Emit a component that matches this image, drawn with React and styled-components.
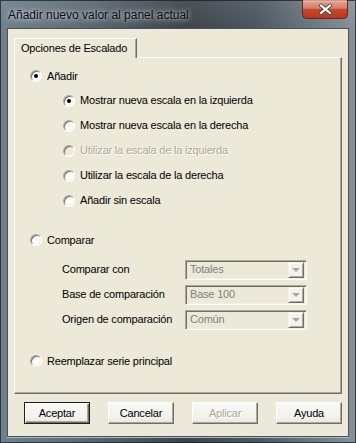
import React from 'react'
import styled, {createGlobalStyle} from 'styled-components'

const GlobalStyle = createGlobalStyle`
  html, body {
    margin: 0;
    padding: 0;
    width: 356px;
    height: 443px;
    overflow: hidden;
    background: #2b3036;
  }

  body {
    font-family: "Liberation Sans", Arial, sans-serif;
  }
`

const CloseIcon = () => (
  <svg width="46" height="19" viewBox="0 0 46 19">
    <defs>
      <linearGradient id="closeFill" x1="0" y1="0" x2="0" y2="1">
        <stop offset="0" stopColor="#e6a898" />
        <stop offset="0.45" stopColor="#d67a64" />
        <stop offset="0.5" stopColor="#c44a2e" />
        <stop offset="1" stopColor="#b8361c" />
      </linearGradient>
    </defs>
    <path
      d="M0.5 0 H45.5 V14.5 Q45.5 18.5 41.5 18.5 H4.5 Q0.5 18.5 0.5 14.5 Z"
      fill="url(#closeFill)"
      stroke="#5e2a22"
    />
    <path d="M1.5 1 H44.5" stroke="#f3c9bd" strokeWidth="1" />
    <path d="M19 5.5 L28 13 M28 5.5 L19 13" stroke="#4a4a4a" strokeWidth="4" strokeLinecap="round" />
    <path d="M19 5.5 L28 13 M28 5.5 L19 13" stroke="#ffffff" strokeWidth="2.2" strokeLinecap="round" />
  </svg>
)

const Radio = ({checked, disabled}) => (
  <RadioCircle disabled={disabled}>{checked && <RadioDot />}</RadioCircle>
)

const Option = ({label, checked, disabled, tall}) => (
  <OptionRow tall={tall}>
    <Radio checked={checked} disabled={disabled} />
    <OptionText disabled={disabled}>{label}</OptionText>
  </OptionRow>
)

const Select = ({value}) => (
  <Combo>
    <ComboValue>{value}</ComboValue>
    <ComboButton>
      <Arrow />
    </ComboButton>
  </Combo>
)

const App = () => {
  return (
    <Window>
      <GlobalStyle />
      <TitleBar>
        <Title>Añadir nuevo valor al panel actual</Title>
        <CloseButton>
          <CloseIcon />
        </CloseButton>
      </TitleBar>

      <Client>
        <TabStrip>
          <Tab>Opciones de Escalado</Tab>
        </TabStrip>

        <Panel>
          <Option label="Añadir" checked />
          <SubGroup>
            <Option label="Mostrar nueva escala en la izquierda" checked tall />
            <Option label="Mostrar nueva escala en la derecha" tall />
            <Option label="Utilizar la escala de la izquierda" disabled tall />
            <Option label="Utilizar la escala de la derecha" tall />
            <Option label="Añadir sin escala" tall />
          </SubGroup>

          <Spacer size={15} />
          <Option label="Comparar" />

          <CompareGrid>
            <FieldLabel>Comparar con</FieldLabel>
            <Select value="Totales" />
            <FieldLabel>Base de comparación</FieldLabel>
            <Select value="Base 100" />
            <FieldLabel>Origen de comparación</FieldLabel>
            <Select value="Común" />
          </CompareGrid>

          <Spacer size={17} />
          <Option label="Reemplazar serie principal" />
        </Panel>

        <ButtonRow>
          <Button isDefault>Aceptar</Button>
          <Button>Cancelar</Button>
          <Button disabled>Aplicar</Button>
          <Button>Ayuda</Button>
        </ButtonRow>
      </Client>
    </Window>
  )
}

const Window = styled.div`
  width: 356px;
  height: 443px;
  box-sizing: border-box;
  display: flex;
  flex-direction: column;
  padding: 0 7px 6px 7px;

  background:
    linear-gradient(180deg, rgba(255, 255, 255, 0.08) 0%, rgba(255, 255, 255, 0) 28px),
    linear-gradient(90deg, #70818d 0%, #5d6b76 22%, #3d434a 52%, #4c5660 72%, #87919a 100%);
  box-shadow: inset 0 0 0 1px rgba(20, 24, 28, 0.7);
`

const TitleBar = styled.div`
  height: 28px;
  flex-shrink: 0;
  display: flex;
  justify-content: space-between;
  align-items: flex-start;
  padding-left: 1px;
`

const Title = styled.div`
  margin-top: 8px;
  font-size: 12px;
  line-height: 14px;
  color: #0c0c14;
  white-space: nowrap;
  text-shadow: 0 0 4px rgba(255, 255, 255, 0.75), 0 0 8px rgba(255, 255, 255, 0.5);
`

const CloseButton = styled.div`
  width: 46px;
  height: 19px;
  margin-right: 1px;
  display: flex;
`

const Client = styled.div`
  flex: 1;
  display: flex;
  flex-direction: column;
  padding: 9px 6px 12px 6px;

  background: #ece9d8;
  border: 1px solid #4a535b;
  box-shadow: 0 1px 0 #9fb9cc;
`

const TabStrip = styled.div`
  display: flex;
  height: 19px;
  flex-shrink: 0;
`

const Tab = styled.div`
  width: 123px;
  box-sizing: border-box;
  margin-bottom: -1px;
  padding: 3px 0 0 6px;
  position: relative;
  z-index: 1;

  font-size: 11px;
  letter-spacing: -0.2px;
  line-height: 13px;
  color: #000;

  background: #ece9d8;
  border-top: 1px solid #fff;
  border-left: 1px solid #fff;
  border-right: 1px solid #716f64;
  border-top-left-radius: 2px;
  box-shadow: inset -1px 0 0 #aca899;
`

const Panel = styled.div`
  flex: 1;
  display: flex;
  flex-direction: column;
  padding: 6px 0 0 15px;

  border: 1px solid;
  border-color: #fff #716f64 #716f64 #fff;
  box-shadow: inset -1px -1px 0 #aca899;
`

const SubGroup = styled.div`
  display: flex;
  flex-direction: column;
  padding-left: 33px;
`

const Spacer = styled.div`
  height: ${p => p.size}px;
  flex-shrink: 0;
`

const OptionRow = styled.div`
  height: ${p => (p.tall ? 25 : 24)}px;
  flex-shrink: 0;
  display: flex;
  align-items: center;
  gap: 5px;
`

const RadioCircle = styled.span`
  width: 12px;
  height: 12px;
  box-sizing: border-box;
  flex-shrink: 0;
  display: flex;
  align-items: center;
  justify-content: center;

  border-radius: 50%;
  border: 1px solid;
  border-color: #aca899 #fff #fff #aca899;
  background: ${p => (p.disabled ? '#ece9d8' : '#fff')};
  box-shadow: inset 1px 1px 0 #716f64, inset -1px -1px 0 #f1efe2;
`

const RadioDot = styled.span`
  width: 4px;
  height: 4px;
  border-radius: 50%;
  background: #000;
`

const OptionText = styled.span`
  font-size: 11px;
  letter-spacing: -0.2px;
  line-height: 13px;
  white-space: nowrap;
  color: ${p => (p.disabled ? '#aca899' : '#000')};
  text-shadow: ${p => (p.disabled ? '1px 1px 0 #fff' : 'none')};
`

const CompareGrid = styled.div`
  display: grid;
  grid-template-columns: 123px 122px;
  grid-auto-rows: 25px;
  align-items: center;
  margin-top: 5px;
  padding-left: 32px;
`

const FieldLabel = styled.span`
  font-size: 11px;
  letter-spacing: -0.2px;
  line-height: 13px;
  color: #000;
  white-space: nowrap;
`

const Combo = styled.div`
  width: 122px;
  height: 20px;
  box-sizing: border-box;
  display: flex;
  align-items: center;
  justify-content: space-between;
  padding: 2px 2px 2px 4px;

  background: #ece9d8;
  border: 1px solid;
  border-color: #aca899 #fff #fff #aca899;
  box-shadow: inset 1px 1px 0 #716f64, inset -1px -1px 0 #f1efe2;
`

const ComboValue = styled.span`
  font-size: 11px;
  letter-spacing: -0.2px;
  line-height: 13px;
  color: #808080;
`

const ComboButton = styled.span`
  width: 16px;
  height: 16px;
  box-sizing: border-box;
  display: flex;
  align-items: center;
  justify-content: center;

  background: #f3f2ec;
  border: 1px solid;
  border-color: #f1efe2 #716f64 #716f64 #f1efe2;
  box-shadow: inset 1px 1px 0 #fff, inset -1px -1px 0 #aca899;
`

const Arrow = styled.span`
  width: 0;
  height: 0;
  margin-top: 1px;
  border-left: 4px solid transparent;
  border-right: 4px solid transparent;
  border-top: 4px solid #aca899;
`

const ButtonRow = styled.div`
  display: flex;
  flex-shrink: 0;
  justify-content: space-between;
  margin-top: 8px;
  padding-left: 10px;
`

const Button = styled.div`
  width: 66px;
  height: 22px;
  box-sizing: border-box;
  display: flex;
  align-items: center;
  justify-content: center;

  font-size: 11px;
  letter-spacing: -0.2px;
  color: ${p => (p.disabled ? '#aca899' : '#000')};
  text-shadow: ${p => (p.disabled ? '1px 1px 0 #fff' : 'none')};

  background: linear-gradient(180deg, #f8f8f6 0%, #f2f1ec 70%, #e9e7de 100%);
  border: 1px solid;
  border-color: ${p => (p.isDefault ? '#1e1e1e' : '#fff #716f64 #716f64 #fff')};
  box-shadow: ${p =>
    p.isDefault
      ? 'inset 1px 1px 0 #fff, inset -1px -1px 0 #716f64, inset -2px -2px 0 #aca899'
      : 'inset -1px -1px 0 #aca899'};
`

export default App
